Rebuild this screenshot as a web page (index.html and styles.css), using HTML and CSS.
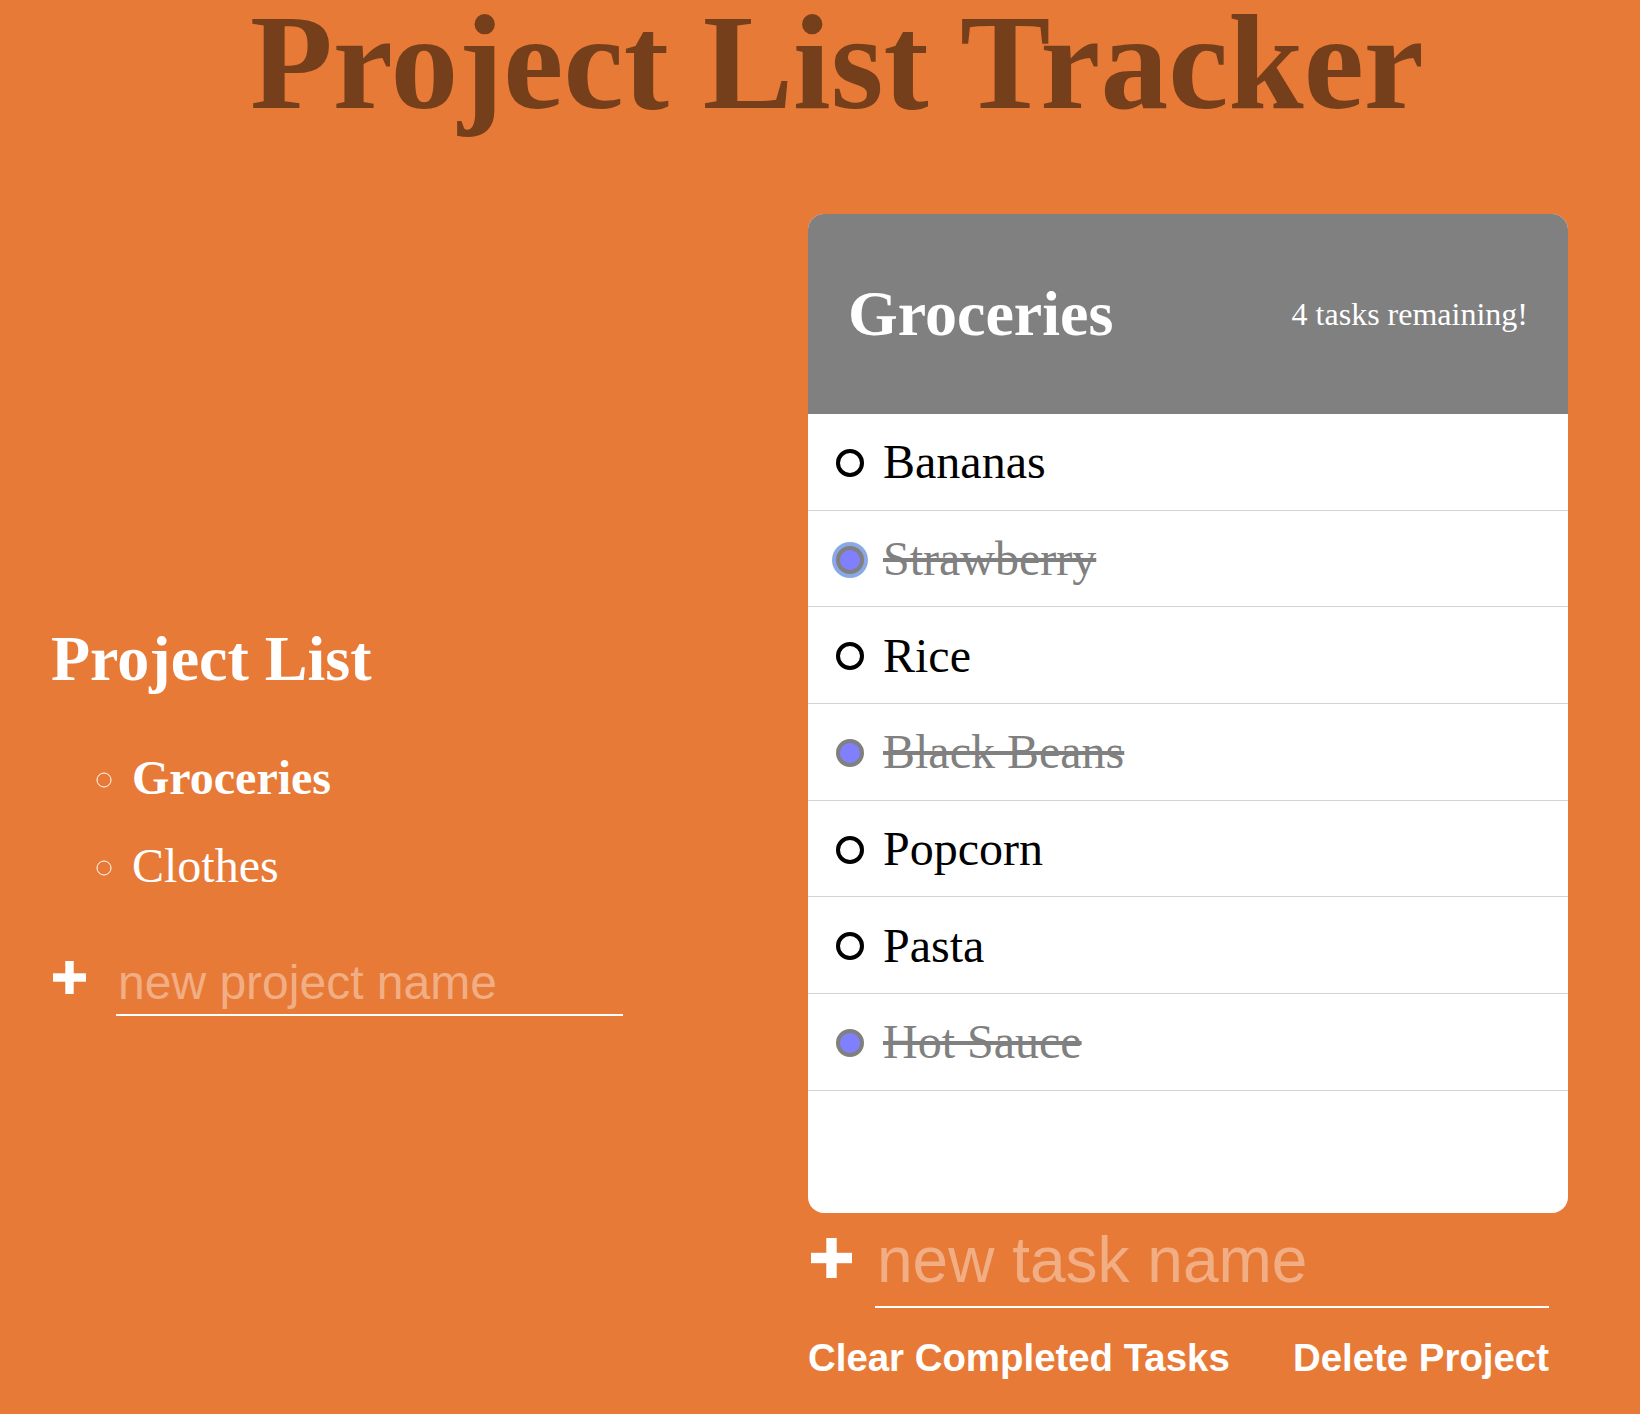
FILE: index.html
```html
<!DOCTYPE html>
<html lang="en">
<head>
<meta charset="utf-8">
<title>Project List Tracker</title>
<link rel="stylesheet" href="styles.css">
</head>
<body>
<h1 class="title">Project List Tracker</h1>
<main class="layout">
  <section class="projects">
    <h2 class="projects-title">Project List</h2>
    <ul class="project-list">
      <li class="project active">Groceries</li>
      <li class="project">Clothes</li>
    </ul>
    <form class="new-form new-project">
      <button type="button" class="add-btn add-project" aria-label="create new project">
        <svg width="33" height="33" viewBox="0 0 33 33"><rect x="12.3" y="0" width="8.4" height="33" fill="#fff"/><rect x="0" y="12.3" width="33" height="8.4" fill="#fff"/></svg>
      </button>
      <input type="text" class="new-input project-input" placeholder="new project name">
    </form>
  </section>
  <section class="tasks-col">
    <div class="card">
      <div class="card-header">
        <h2 class="card-title">Groceries</h2>
        <p class="task-count">4 tasks remaining!</p>
      </div>
      <ul class="task-list">
        <li class="task"><label class="task-label"><input type="checkbox" class="task-check"><span class="task-name">Bananas</span></label></li>
        <li class="task"><label class="task-label"><input type="checkbox" class="task-check focused" checked><span class="task-name">Strawberry</span></label></li>
        <li class="task"><label class="task-label"><input type="checkbox" class="task-check"><span class="task-name">Rice</span></label></li>
        <li class="task"><label class="task-label"><input type="checkbox" class="task-check" checked><span class="task-name">Black Beans</span></label></li>
        <li class="task"><label class="task-label"><input type="checkbox" class="task-check"><span class="task-name">Popcorn</span></label></li>
        <li class="task"><label class="task-label"><input type="checkbox" class="task-check"><span class="task-name">Pasta</span></label></li>
        <li class="task"><label class="task-label"><input type="checkbox" class="task-check" checked><span class="task-name">Hot Sauce</span></label></li>
      </ul>
    </div>
    <div class="task-footer">
      <form class="new-form new-task">
        <button type="button" class="add-btn add-task" aria-label="create new task">
          <svg width="41" height="40" viewBox="0 0 41 40"><rect x="15.3" y="0" width="10.4" height="40" fill="#fff"/><rect x="0" y="14.8" width="41" height="10.4" fill="#fff"/></svg>
        </button>
        <input type="text" class="new-input task-input" placeholder="new task name">
      </form>
      <div class="actions">
        <button type="button" class="action-btn">Clear Completed Tasks</button>
        <button type="button" class="action-btn">Delete Project</button>
      </div>
    </div>
  </section>
</main>
</body>
</html>
```
FILE: styles.css
```css
* {
  box-sizing: border-box;
}

body {
  margin: 0;
  background: #e87a37;
  font-family: "Liberation Serif", "Times New Roman", serif;
  color: #fff;
}

.title {
  margin: 0 0 89px;
  padding-left: 34px;
  font-size: 135.5px;
  line-height: 125px;
  font-weight: bold;
  text-align: center;
  color: #763f1b;
}

.layout {
  display: grid;
  grid-template-columns: 1fr 760px;
  padding: 0 72px 0 51px;
}

/* Left column */
.projects-title {
  margin: 0;
  padding-top: 408px;
  font-size: 64px;
  font-weight: bold;
  line-height: normal;
}

.project-list {
  margin: 54px 0 0;
  padding-left: 81px;
  list-style: circle;
  font-size: 48px;
  line-height: normal;
}

.project + .project {
  margin-top: 33px;
}

.project.active {
  font-weight: bold;
}

.new-form {
  display: flex;
  align-items: flex-start;
}

.add-btn {
  display: block;
  padding: 0;
  border: none;
  background: none;
  cursor: pointer;
}

.add-btn svg {
  display: block;
}

.new-input {
  background: transparent;
  border: none;
  border-bottom: 2px solid #fff;
  outline: none;
  color: #fff;
  font-family: "Liberation Sans", Arial, sans-serif;
  line-height: normal;
}

.new-input::placeholder {
  color: #f1ae84;
}

.new-project {
  margin-top: 61px;
}

.add-project {
  margin: 7px 30px 0 2px;
}

.project-input {
  width: 507px;
  font-size: 48px;
  padding: 1px 2px 4px;
}

/* Right column */
.card {
  background: #fff;
  border-radius: 16px;
  overflow: hidden;
  padding-bottom: 122px;
}

.card-header {
  height: 200px;
  background: #808080;
  display: flex;
  align-items: center;
  justify-content: space-between;
  padding: 0 40px;
}

.card-title {
  margin: 0;
  font-size: 64px;
  font-weight: bold;
  line-height: normal;
}

.task-count {
  margin: 0;
  font-size: 32px;
  line-height: normal;
}

.task-list {
  margin: 0;
  padding: 0;
  list-style: none;
}

.task {
  height: 96.7px;
  border-bottom: 1px solid #d3d3d3;
  display: flex;
  align-items: center;
  padding-left: 28px;
  font-size: 48px;
  color: #000;
}

.task-label {
  display: flex;
  align-items: center;
  line-height: normal;
  cursor: pointer;
}

.task-check {
  appearance: none;
  -webkit-appearance: none;
  width: 28px;
  height: 28px;
  margin: 2px 19px 0 0;
  border: 4px solid #000;
  border-radius: 50%;
  background: #fff;
  flex: none;
}

.task-check:checked {
  border-color: #808080;
  background: #8080ff;
}

.task-check.focused {
  box-shadow: 0 0 0 4px #8ba8e6;
}

.task-check:checked + .task-name {
  color: #808080;
  text-decoration: line-through;
}

.task-footer {
  padding-right: 19px;
}

.new-task {
  margin-top: 8px;
}

.add-task {
  margin: 17px 23px 0 3px;
}

.task-input {
  flex: 1;
  min-width: 0;
  font-size: 64px;
  padding: 2px 2px 9px;
}

.actions {
  display: flex;
  justify-content: space-between;
  margin-top: 28px;
}

.action-btn {
  padding: 0;
  border: none;
  background: none;
  color: #fff;
  font-family: "Liberation Sans", Arial, sans-serif;
  font-size: 38.4px;
  font-weight: bold;
  line-height: normal;
  cursor: pointer;
}
```
